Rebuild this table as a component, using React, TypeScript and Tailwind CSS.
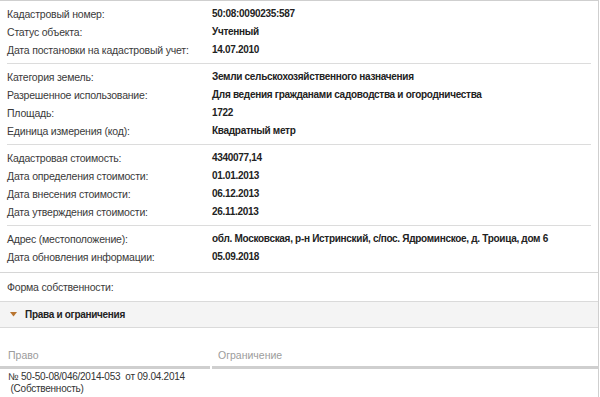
const rowsA = [
  ['Кадастровый номер:', '50:08:0090235:587'],
  ['Статус объекта:', 'Учтенный'],
  ['Дата постановки на кадастровый учет:', '14.07.2010'],
];
const rowsB = [
  ['Категория земель:', 'Земли сельскохозяйственного назначения'],
  ['Разрешенное использование:', 'Для ведения гражданами садоводства и огородничества'],
  ['Площадь:', '1722'],
  ['Единица измерения (код):', 'Квадратный метр'],
];
const rowsC = [
  ['Кадастровая стоимость:', '4340077,14'],
  ['Дата определения стоимости:', '01.01.2013'],
  ['Дата внесения стоимости:', '06.12.2013'],
  ['Дата утверждения стоимости:', '26.11.2013'],
];
const rowsD = [
  ['Адрес (местоположение):', 'обл. Московская, р-н Истринский, с/пос. Ядроминское, д. Троица, дом 6'],
  ['Дата обновления информации:', '05.09.2018'],
];

function Section({ rows, last }: { rows: string[][]; last?: boolean }) {
  return (
    <div className={last ? 'pt-[4px] pb-[6px]' : 'pt-[4px] pb-[4px] mx-[7px] border-b border-[#dcdcdc]'}>
      {rows.map(([label, value]) => (
        <div key={label} className={'flex h-[18px] items-center ' + (last ? 'px-[7px]' : '')}>
          <span className="w-[205px] shrink-0 text-[10.5px] tracking-[-0.2px] text-[#3a3a3a]">{label}</span>
          <span className="font-bold text-[10px] tracking-[-0.3px] text-[#222]">{value}</span>
        </div>
      ))}
    </div>
  );
}

export default function App() {
  return (
    <div
      className="w-[600px] h-[397px] bg-white overflow-hidden text-[10.5px] leading-[12px]"
      style={{ fontFamily: '"Liberation Sans", Arial, sans-serif' }}
    >
      <div className="w-[599px] border-t border-r border-[#cfcfcf]">
        <Section rows={rowsA} />
        <Section rows={rowsB} />
        <Section rows={rowsC} />
        <Section rows={rowsD} last />

        {/* ownership */}
        <div className="border-t border-[#d6d6d6] h-[29px] flex items-center px-[7px] tracking-[-0.2px] text-[#3a3a3a]">
          Форма собственности:
        </div>

        {/* rights header */}
        <div className="h-[27px] bg-[#f4f4f4] border-y border-[#dadada] flex items-center pl-[10px] gap-[8px]">
          <svg width="7" height="5" viewBox="0 0 7 5">
            <path d="M0 0 L7 0 L3.5 4.5 Z" fill="#b8742f" />
          </svg>
          <span className="font-bold text-[10px] tracking-[-0.3px] text-[#222]">Права и ограничения</span>
        </div>

        {/* rights table */}
        <div className="pt-[21px]">
          <div className="flex text-[10.5px] text-[#9c9c9c]">
            <div className="w-[210px] pl-[8px] pb-[5px] border-b-[3px] border-[#cfcfcf]">Право</div>
            <div className="flex-1 ml-[2px] pl-[6px] pb-[5px] border-b-[3px] border-[#cfcfcf]">Ограничение</div>
          </div>
          <div className="flex border-b border-[#dadada] text-[10px] tracking-[-0.25px] text-[#333] pt-[2px] pb-[2px]">
            <div className="w-[212px] pl-[8px]">
              <div>№ 50-50-08/046/2014-053&nbsp; от 09.04.2014</div>
              <div>&nbsp;(Собственность)</div>
            </div>
            <div className="flex-1" />
          </div>
        </div>
      </div>
    </div>
  );
}
